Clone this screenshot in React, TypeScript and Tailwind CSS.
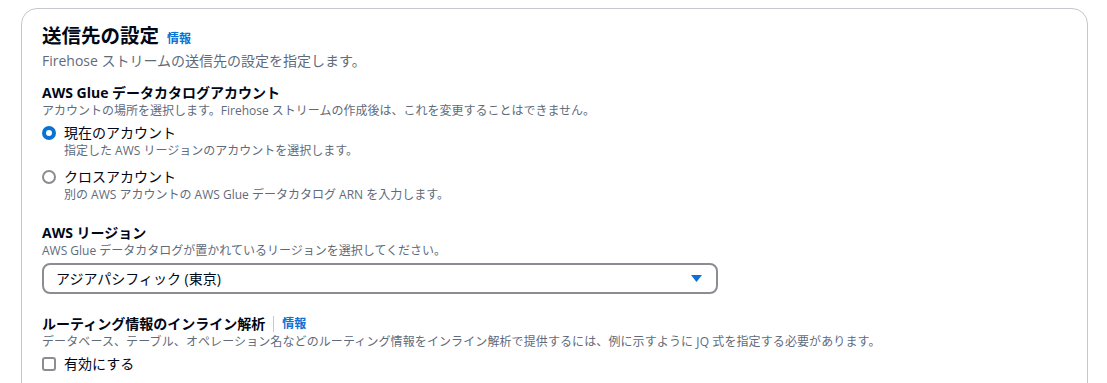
import { useState } from "react";

const font = { fontFamily: '"Open Sans", "Noto Sans CJK JP", sans-serif' };

type RadioOption = {
  id: string;
  label: string;
  description: string;
};

const accountOptions: RadioOption[] = [
  {
    id: "current",
    label: "現在のアカウント",
    description: "指定した AWS リージョンのアカウントを選択します。",
  },
  {
    id: "cross",
    label: "クロスアカウント",
    description: "別の AWS アカウントの AWS Glue データカタログ ARN を入力します。",
  },
];

const InfoLink = () => (
  <a className="text-[12px] font-bold leading-4 text-[#0972d3] cursor-pointer">
    情報
  </a>
);

const Radio = ({ checked }: { checked: boolean }) => (
  <span
    className={`mt-[3px] block w-[14px] h-[14px] rounded-full shrink-0 bg-white ${
      checked ? "border-[4px] border-[#0972d3]" : "border-2 border-[#8c8c94]"
    }`}
  />
);

const App = () => {
  const [account, setAccount] = useState("current");
  const [enabled, setEnabled] = useState(false);

  return (
    <div className="bg-white h-[383px] overflow-hidden pl-[21px] pr-[19px] pt-[8px]" style={font}>
      <div className="border border-[#c6c6cd] rounded-2xl h-[420px] px-5 pt-[15px] text-[#000716]">
        <div className="flex items-baseline gap-[8px]">
          <h2 className="text-[19.5px] font-bold leading-6">送信先の設定</h2>
          <InfoLink />
        </div>
        <p className="mt-[3px] text-[14px] leading-5 text-[#5f6b7a]">
          Firehose ストリームの送信先の設定を指定します。
        </p>

        <div className="mt-3">
          <div className="text-[14px] font-bold leading-5">AWS Glue データカタログアカウント</div>
          <div className="text-[12px] leading-4 text-[#5f6b7a]">
            アカウントの場所を選択します。Firehose ストリームの作成後は、これを変更することはできません。
          </div>
          <div className="mt-1 flex flex-col gap-2">
            {accountOptions.map((opt) => (
              <label
                key={opt.id}
                className="flex gap-2 cursor-pointer"
                onClick={() => setAccount(opt.id)}
              >
                <Radio checked={account === opt.id} />
                <span className="flex flex-col">
                  <span className="text-[14px] leading-5">{opt.label}</span>
                  <span className="text-[12px] leading-4 text-[#5f6b7a]">{opt.description}</span>
                </span>
              </label>
            ))}
          </div>
        </div>

        <div className="mt-5">
          <div className="text-[14px] font-bold leading-5">AWS リージョン</div>
          <div className="text-[12px] leading-4 text-[#5f6b7a]">
            AWS Glue データカタログが置かれているリージョンを選択してください。
          </div>
          <button className="mt-1 w-[676px] h-[31px] border-2 border-[#8c8c94] rounded-lg flex items-center justify-between pl-[12px] pr-[14px] bg-white">
            <span className="text-[14px] leading-5">アジアパシフィック (東京)</span>
            <svg width="11" height="7" viewBox="0 0 11 7">
              <path d="M0 0 H11 L5.5 7 Z" fill="#0972d3" />
            </svg>
          </button>
        </div>

        <div className="mt-5">
          <div className="flex items-center">
            <span className="text-[14px] font-bold leading-5">ルーティング情報のインライン解析</span>
            <span className="mx-2 w-px h-4 bg-[#c6c6cd]" />
            <InfoLink />
          </div>
          <div className="text-[12px] tracking-[0.1px] leading-4 text-[#5f6b7a]">
            データベース、テーブル、オペレーション名などのルーティング情報をインライン解析で提供するには、例に示すように JQ 式を指定する必要があります。
          </div>
          <label className="mt-1 flex gap-2 cursor-pointer" onClick={() => setEnabled(!enabled)}>
            <span
              className={`mt-[3px] block w-[14px] h-[14px] rounded-[3px] border-2 ${
                enabled ? "bg-[#0972d3] border-[#0972d3]" : "border-[#8c8c94] bg-white"
              }`}
            />
            <span className="text-[14px] leading-5">有効にする</span>
          </label>
        </div>
      </div>
    </div>
  );
};

export default App;
